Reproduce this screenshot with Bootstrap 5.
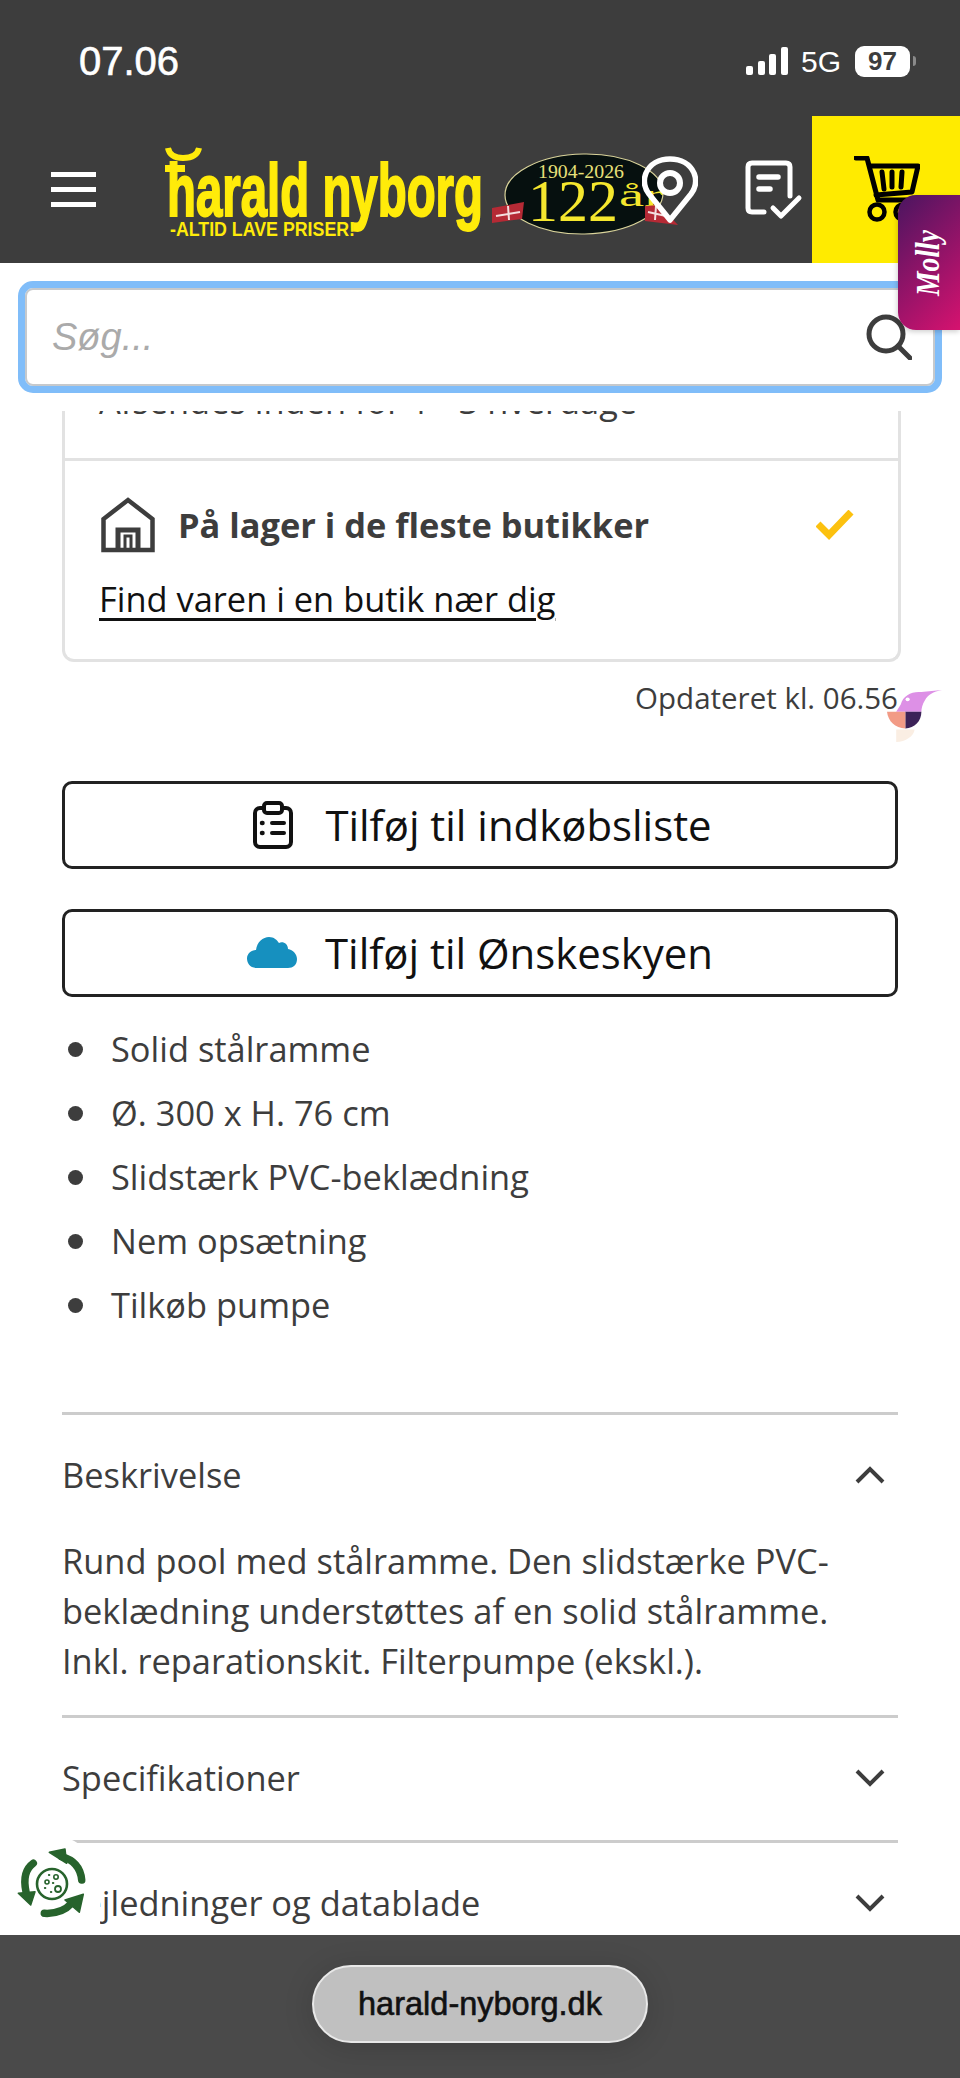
<!DOCTYPE html>
<html lang="da">
<head>
    <meta charset="UTF-8">
    <meta name="viewport" content="width=device-width, initial-scale=1.0">
    <title>Harald Nyborg</title>
    <link href="https://cdn.jsdelivr.net/npm/bootstrap@5.3.0/dist/css/bootstrap.min.css" rel="stylesheet">
    <style>
        html, body { height: 2078px; overflow: hidden; }
        body { position: relative; background: #fff; color: #3d3d3d; font-family: "Open Sans", sans-serif; }

        /* top bar */
        .top-wrap { position: relative; z-index: 3; background: #fff; height: 411px; }
        .top-dark { background: #3d3d3d; height: 263px; }
        .status-row { height: 116px; padding: 6px 44px 0 79px; color: #fff; font-family: "Liberation Sans", sans-serif; }
        .status-time { font-size: 40px; font-weight: 400; -webkit-text-stroke: .6px #fff; }
        .status-net { font-size: 30px; margin: 0 14px 0 13px; }
        .batt { width: 55px; height: 31px; border-radius: 9px; background: #fff; color: #3d3d3d; font-size: 26px; font-weight: 700; line-height: 31px; text-align: center; }
        .batt-tip { width: 3px; height: 10px; margin-left: 3px; background: #8a8a8a; border-radius: 0 3px 3px 0; }
        .nav-row { height: 147px; }
        .burger { width: 45px; margin: 0 0 0 51px; }
        .burger-line { display: block; height: 5px; background: #fff; margin-bottom: 10px; }
        .burger-line:last-child { margin-bottom: 0; }
        .logo-svg { margin-left: 69px; margin-bottom: 9px; flex: none; }
        .pin-svg { margin-left: -38px; flex: none; }
        .note-svg { margin-left: 47px; flex: none; }
        .cart-box { width: 148px; height: 147px; margin-left: auto; background: #ffeb00; padding: 40px 0 0 42px; }

        .molly-tab { position: absolute; z-index: 5; top: 195px; left: 898px; width: 62px; height: 135px; border-radius: 18px 0 0 18px; background: linear-gradient(135deg, #4a1560, #d6126f); box-shadow: -1px 2px 5px rgba(0,0,0,.18); }

        /* search */
        .search-box { margin: 18px 18px 0; height: 112px; border: 7px solid #80bdf9; border-radius: 15px; box-shadow: inset 0 0 0 2px #c6c9cc; padding: 0 23px 0 27px; }
        .search-hint { font-family: "Liberation Sans", sans-serif; font-style: italic; font-size: 38px; color: #aaa; }

        /* content */
        .page-main { margin-top: -27px; padding: 0 62px; position: relative; }
        .stock-card { margin-right: -3px; border: 3px solid #e2e2e2; border-radius: 0 0 12px 12px; border-top: 0; }
        .stock-top { height: 77px; padding: 0 0 0 34px; border-bottom: 3px solid #e2e2e2; font-size: 34.4px; line-height: 34px; }
        .stock-bottom { height: 198px; padding: 36px 44px 0 36px; }
        .stock-title { font-size: 34.4px; font-weight: 700; margin-left: 23px; line-height: 40px; }
        .stock-link { display: block; margin: 24px 0 0 -2px; color: #111; font-size: 34.4px; line-height: 44px; text-decoration-thickness: 3px; text-underline-offset: 6px; }
        .stamp { font-size: 29.5px; line-height: 40px; text-align: right; margin-top: 16px; margin-bottom: 63px; }
        .bird { position: absolute; top: 306px; left: 887px; }

        .outline-btn { height: 88px; border: 3px solid #222; border-radius: 10px; color: #111; font-size: 41.9px; padding: 0; margin-bottom: 40px; background: #fff; }
        .outline-btn:hover { background: #fff; color: #111; border-color: #222; }
        .list-btn { padding-left: 5px; }
        .btn-icon { flex: none; }

        .point-list { font-size: 34.4px; line-height: 64px; margin: -20px 0 75px; }
        .point-list li { display: flex; align-items: center; }
        .point-list li::before { content: ""; width: 15px; height: 15px; border-radius: 50%; background: #3d3d3d; margin: 0 28px 0 6px; flex: none; }

        .acc-row { border-top: 3px solid #ccc; }
        .acc-head { height: 122px; font-size: 34.4px; padding: 0 13px 3px 0; }
        .acc-body { font-size: 34.4px; line-height: 50px; margin: -1px 0 0; padding: 0 0 29px; }

        .eco-mark { position: absolute; z-index: 2; left: 1px; top: 1835px; width: 99px; height: 100px; padding: 5px 0 0 7px; background: #fff; border-radius: 50% 50% 12px 50%; }

        /* browser bar */
        .url-bar { position: absolute; z-index: 4; left: 0; right: 0; bottom: 0; height: 143px; background: #4a4a4a; padding-top: 30px; }
        .url-pill { width: 336px; height: 78px; border-radius: 39px; background: #c0c0c0; border: 2px solid #e8e8e8; color: #111; font-family: "Liberation Sans", sans-serif; font-size: 32.5px; -webkit-text-stroke: .6px #111; box-shadow: 0 4px 30px rgba(0,0,0,.15); }
    </style>
</head>
<body>

    <!-- Status bar, navbar and search -->
    <div class="top-wrap">
        <div class="top-dark">
            <div class="status-row d-flex align-items-center">
                <span class="status-time">07.06</span>
                <div class="ms-auto d-flex align-items-center">
                    <svg width="42" height="28" viewBox="0 0 42 28" fill="#fff">
                        <rect x="0" y="19" width="7" height="9" rx="2"/>
                        <rect x="12" y="14" width="7" height="14" rx="2"/>
                        <rect x="23" y="7" width="7" height="21" rx="2"/>
                        <rect x="35" y="0" width="7" height="28" rx="2"/>
                    </svg>
                    <span class="status-net">5G</span>
                    <span class="batt">97</span>
                    <span class="batt-tip"></span>
                </div>
            </div>
            <nav class="nav-row d-flex align-items-center">
                <div class="burger">
                    <span class="burger-line"></span>
                    <span class="burger-line"></span>
                    <span class="burger-line"></span>
                </div>
                <svg class="logo-svg" width="515" height="110" viewBox="165 130 515 110">
                    <path d="M168 148 Q170 158 183 158 Q197 158 199 148" fill="none" stroke="#ffeb0a" stroke-width="6"/>
                    <rect x="165" y="165" width="20" height="7" fill="#ffeb0a"/>
                    <text x="167" y="216" textLength="316" lengthAdjust="spacingAndGlyphs" font-family="Liberation Sans" font-weight="700" font-size="74" fill="#ffeb0a" stroke="#ffeb0a" stroke-width="2">harald nyborg</text>
                    <text x="170" y="236" textLength="185" lengthAdjust="spacingAndGlyphs" font-family="Liberation Sans" font-weight="700" font-size="20" fill="#ffeb0a">-ALTID LAVE PRISER!</text>
                    <ellipse cx="584" cy="194" rx="79" ry="40" fill="#06100f" stroke="#d9d39a" stroke-width="1.2" transform="rotate(-1 584 194)"/>
                    <text x="538" y="178" textLength="86" lengthAdjust="spacingAndGlyphs" font-family="Liberation Serif" font-size="19" fill="#e8e07a">1904-2026</text>
                    <text x="528" y="221" textLength="90" lengthAdjust="spacingAndGlyphs" font-family="Liberation Serif" font-size="60" fill="#f5e72e">122</text>
                    <text x="619" y="206" textLength="44" lengthAdjust="spacingAndGlyphs" font-family="Liberation Serif" font-size="32" fill="#f5e72e">år</text>
                    <path d="M492 208 l32 -6 l-2 17 l-30 4 z M645 206 l14 -1 l19 20 l-33 -4 z" fill="#b52a35"/>
                    <path d="M496 216 l24 -4 M508 206 l1 14 M648 212 l18 4 M656 206 l-1 14" stroke="#f3dede" stroke-width="2" fill="none"/>
                </svg>
                <svg class="pin-svg" width="56" height="68" viewBox="0 0 56 68" fill="none" stroke="#fff" stroke-linejoin="round">
                    <path d="M28 64 L7 38 C1 30 2 22 4 17 C8 8 17 3 28 3 C39 3 48 8 52 17 C54 22 55 30 49 38 Z" stroke-width="5.5"/>
                    <circle cx="28" cy="27" r="10" stroke-width="6"/>
                </svg>
                <svg class="note-svg" width="58" height="60" viewBox="0 0 58 60" fill="none" stroke="#fff" stroke-width="5" stroke-linecap="round" stroke-linejoin="round">
                    <path d="M19 52 L7 52 Q3 52 3 48 L3 7 Q3 3 7 3 L41 3 Q45 3 45 7 L45 36"/>
                    <path d="M14 17 L33 17 M14 29 L25 29" stroke-width="5.5"/>
                    <path d="M28 48 L36 56 L54 38" stroke-width="5"/>
                </svg>
                <div class="cart-box">
                    <svg width="66" height="66" viewBox="0 0 66 66" fill="none" stroke="#000" stroke-width="4.5" stroke-linecap="round" stroke-linejoin="round">
                        <path d="M2 2 L13 2 L24 44 L58 44" stroke-width="5"/>
                        <path d="M16 10 L64 10 L58 36 L22 39" stroke-width="5"/>
                        <path d="M28 16 L30 33 M38 16 L38 31 M48 16 L47 31" stroke-width="5"/>
                        <circle cx="23" cy="56" r="7.5"/>
                        <circle cx="49" cy="56" r="7.5"/>
                    </svg>
                </div>
            </nav>
        </div>
        <div class="search-box d-flex align-items-center justify-content-between">
            <span class="search-hint">Søg...</span>
            <svg width="46" height="46" viewBox="0 0 46 46" fill="none" stroke="#3d3d3d" stroke-width="5" stroke-linecap="round">
                <circle cx="20" cy="20" r="17"/>
                <path d="M32 32 L44 44"/>
            </svg>
        </div>
    </div>

    <div class="molly-tab d-flex align-items-center justify-content-center">
        <svg width="40" height="90" viewBox="0 0 40 90">
            <text transform="translate(30 78) rotate(-90)" font-family="Liberation Serif" font-style="italic" font-weight="700" font-size="34" fill="#fff" textLength="66" lengthAdjust="spacingAndGlyphs">Molly</text>
        </svg>
    </div>

    <!-- Product content -->
    <main class="page-main">
        <div class="stock-card">
            <div class="stock-top">Afsendes inden for 1 - 3 hverdage</div>
            <div class="stock-bottom">
                <div class="d-flex align-items-center">
                    <svg width="54" height="56" viewBox="0 0 54 56" fill="none" stroke="#3d3d3d" stroke-width="4.5">
                        <path d="M2.5 53 L2.5 22 L27 3 L51.5 22 L51.5 53 Z"/>
                        <path d="M17 53 L17 33 L37 33 L37 53" stroke-width="5"/>
                        <path d="M24 53 L24 39 L30 39 L30 53" stroke-width="3"/>
                    </svg>
                    <span class="stock-title">På lager i de fleste butikker</span>
                    <svg class="ms-auto" width="38" height="30" viewBox="0 0 38 30" fill="none" stroke="#fcc10f" stroke-width="7">
                        <path d="M2 14 L13 25 L35 2"/>
                    </svg>
                </div>
                <a class="stock-link" href="#">Find varen i en butik nær dig</a>
            </div>
        </div>
        <p class="stamp">Opdateret kl. 06.56</p>

        <svg class="bird" width="55" height="52" viewBox="6 2 48 50" preserveAspectRatio="none">
            <path d="M18 16 C20 7 28 3 36 4 L54 2 C46 4 42 6 39 12 C37 15 36 20 36 23 L14 23 Z" fill="#dd90e6"/>
            <circle cx="24" cy="11" r="1.8" fill="#fff"/>
            <path d="M22 23 L36 23 C36 32 30 39 22 39 Z" fill="#3c2258"/>
            <path d="M6 23 L22 23 L22 39 C13 39 7 32 6 23 Z" fill="#f29b86"/>
            <path d="M14 40 L30 40 C30 46 22 52 14 52 Z" fill="#faeee3"/>
        </svg>

        <button class="btn outline-btn list-btn w-100 d-flex align-items-center justify-content-center" type="button">
            <svg class="btn-icon" width="40" height="48" viewBox="0 0 40 48" fill="none" stroke="#111" stroke-width="4" stroke-linecap="round">
                <rect x="2" y="7" width="36" height="39" rx="5"/>
                <rect x="11" y="2" width="18" height="10" rx="3" fill="#fff"/>
                <path d="M19 22 L31 22 M19 32 L31 32"/>
                <path d="M9 22 L9.5 22 M9 32 L9.5 32" stroke-width="4.5"/>
            </svg>
            <span class="ms-4 ps-2">Tilføj til indkøbsliste</span>
        </button>
        <button class="btn outline-btn w-100 d-flex align-items-center justify-content-center" type="button">
            <svg class="btn-icon" width="50" height="32" viewBox="0 0 50 32" fill="#1690bf">
                <path d="M10 31 C3 31 0 26 0 21.5 C0 17 4 13 9 13 C10 5 16 0 22 0 C27 0 30 3 32 6 C36 4 41 7 41 12 C46 13 50 17 50 22 C50 28 46 31 41 31 Z"/>
            </svg>
            <span class="ms-4 ps-1">Tilføj til Ønskeskyen</span>
        </button>

        <ul class="point-list list-unstyled">
            <li>Solid stålramme</li>
            <li>Ø. 300 x H. 76 cm</li>
            <li>Slidstærk PVC-beklædning</li>
            <li>Nem opsætning</li>
            <li>Tilkøb pumpe</li>
        </ul>

        <div class="acc-row">
            <div class="acc-head d-flex align-items-center justify-content-between">
                <span>Beskrivelse</span>
                <svg width="30" height="18" viewBox="0 0 30 18" fill="none" stroke="#3d3d3d" stroke-width="4"><path d="M2 16 L15 3 L28 16"/></svg>
            </div>
            <p class="acc-body">Rund pool med stålramme. Den slidstærke PVC-beklædning understøttes af en solid stålramme. Inkl. reparationskit. Filterpumpe (ekskl.).</p>
        </div>
        <div class="acc-row">
            <div class="acc-head d-flex align-items-center justify-content-between">
                <span>Specifikationer</span>
                <svg width="30" height="18" viewBox="0 0 30 18" fill="none" stroke="#3d3d3d" stroke-width="4"><path d="M2 2 L15 15 L28 2"/></svg>
            </div>
        </div>
        <div class="acc-row">
            <div class="acc-head d-flex align-items-center justify-content-between">
                <span>Vejledninger og datablade</span>
                <svg width="30" height="18" viewBox="0 0 30 18" fill="none" stroke="#3d3d3d" stroke-width="4"><path d="M2 2 L15 15 L28 2"/></svg>
            </div>
        </div>
    </main>

    <!-- Floating recycle mark -->
    <div class="eco-mark">
        <svg width="92" height="92" viewBox="0 0 92 92" fill="none" stroke="#27632c" stroke-linecap="round" stroke-linejoin="round">
            <path d="M53.7 16.7 Q72 21.7 73.7 40" stroke-width="7.5"/>
            <path d="M41.3 12.3 L57 9 L58.7 23.3 Z" fill="#27632c" stroke-width="1.5"/>
            <path d="M25.3 23.3 Q13.7 31.7 18 51.7" stroke-width="7.5"/>
            <path d="M10.3 53.3 L27 51.7 L22.7 65 Z" fill="#27632c" stroke-width="1.5"/>
            <path d="M36.3 73.3 Q53.7 74.3 63.7 63.3" stroke-width="7.5"/>
            <path d="M75.3 54.3 L57 60 L71.3 72.3 Z" fill="#27632c" stroke-width="1.5"/>
            <circle cx="44" cy="44" r="15" stroke-width="2.6"/>
            <circle cx="48" cy="37" r="2.2" stroke-width="1.6"/>
            <circle cx="39" cy="42" r="2" stroke-width="1.6"/>
            <circle cx="50" cy="49" r="3" stroke-width="1.8"/>
            <circle cx="41" cy="35" r=".7" fill="#27632c"/>
            <circle cx="45" cy="43" r=".7" fill="#27632c"/>
            <circle cx="43" cy="52" r=".7" fill="#27632c"/>
            <circle cx="37" cy="48" r=".7" fill="#27632c"/>
        </svg>
    </div>

    <!-- Browser address bar -->
    <div class="url-bar d-flex justify-content-center align-items-start">
        <div class="url-pill d-flex align-items-center justify-content-center">harald-nyborg.dk</div>
    </div>

    <script src="https://cdn.jsdelivr.net/npm/bootstrap@5.3.0/dist/js/bootstrap.bundle.min.js"></script>
</body>
</html>
